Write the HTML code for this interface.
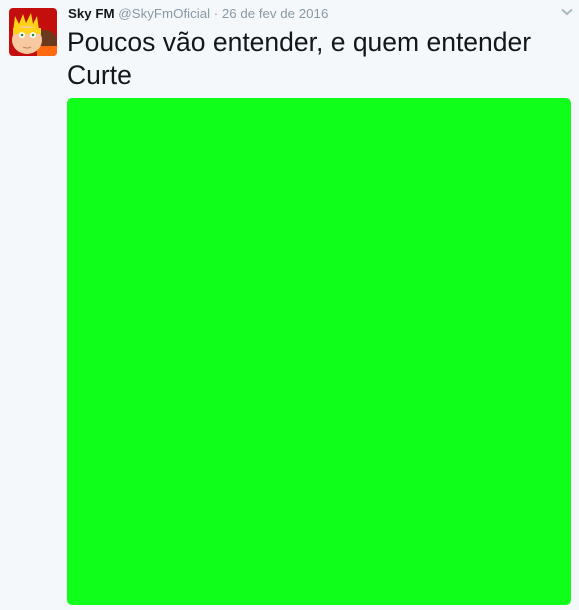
<!DOCTYPE html>
<html><head><meta charset="utf-8"><style>
html,body{margin:0;padding:0;width:579px;height:610px;background:#f5f8fa;overflow:hidden;font-family:"Liberation Sans",Arial,sans-serif}
.av{position:absolute;left:9px;top:8px;width:48px;height:48px;border-radius:4px;overflow:hidden}
.hd{position:absolute;left:68px;top:6px;font-size:13.3px;color:#8899a6;white-space:nowrap}
.hd b{color:#14171a}
.tx{position:absolute;left:67px;top:26px;font-size:26.5px;line-height:33px;color:#14171a;width:500px}
.img{position:absolute;left:67px;top:98px;width:504px;height:507px;background:#0fff1a;border-radius:5px}
.car{position:absolute;left:561px;top:8px}
</style></head><body>
<div class="av"><svg width="48" height="48" viewBox="0 0 48 48">
<rect width="48" height="48" fill="#c40d0d"/>
<circle cx="36" cy="34" r="12" fill="#6b3a1c"/>
<rect x="28" y="38" width="20" height="10" fill="#ff6a10"/>
<polygon points="4,24 6,8 10,16 14,6 17,15 22,5 24,16 28,8 30,22 32,28 4,28" fill="#ffd21a"/>
<ellipse cx="18" cy="32" rx="15" ry="14" fill="#f6c9a0"/>
<rect x="4" y="20" width="28" height="6" fill="#ffd21a"/>
<circle cx="13" cy="27" r="3" fill="#fff"/><circle cx="24" cy="27" r="3" fill="#fff"/>
<circle cx="13" cy="27" r="1.3" fill="#2a8a2a"/><circle cx="24" cy="27" r="1.3" fill="#2a8a2a"/>
<path d="M14 39 q4 2 8 0" stroke="#c08060" stroke-width="1" fill="none"/>
</svg></div>
<div class="hd"><b>Sky FM</b> @SkyFmOficial · 26 de fev de 2016</div>
<svg class="car" width="12" height="8" viewBox="0 0 12 8"><path d="M1 1.5 L6 6 L11 1.5" stroke="#aab8c2" stroke-width="2" fill="none"/></svg>
<div class="tx">Poucos vão entender, e quem entender Curte</div>
<div class="img"></div>
</body></html>
